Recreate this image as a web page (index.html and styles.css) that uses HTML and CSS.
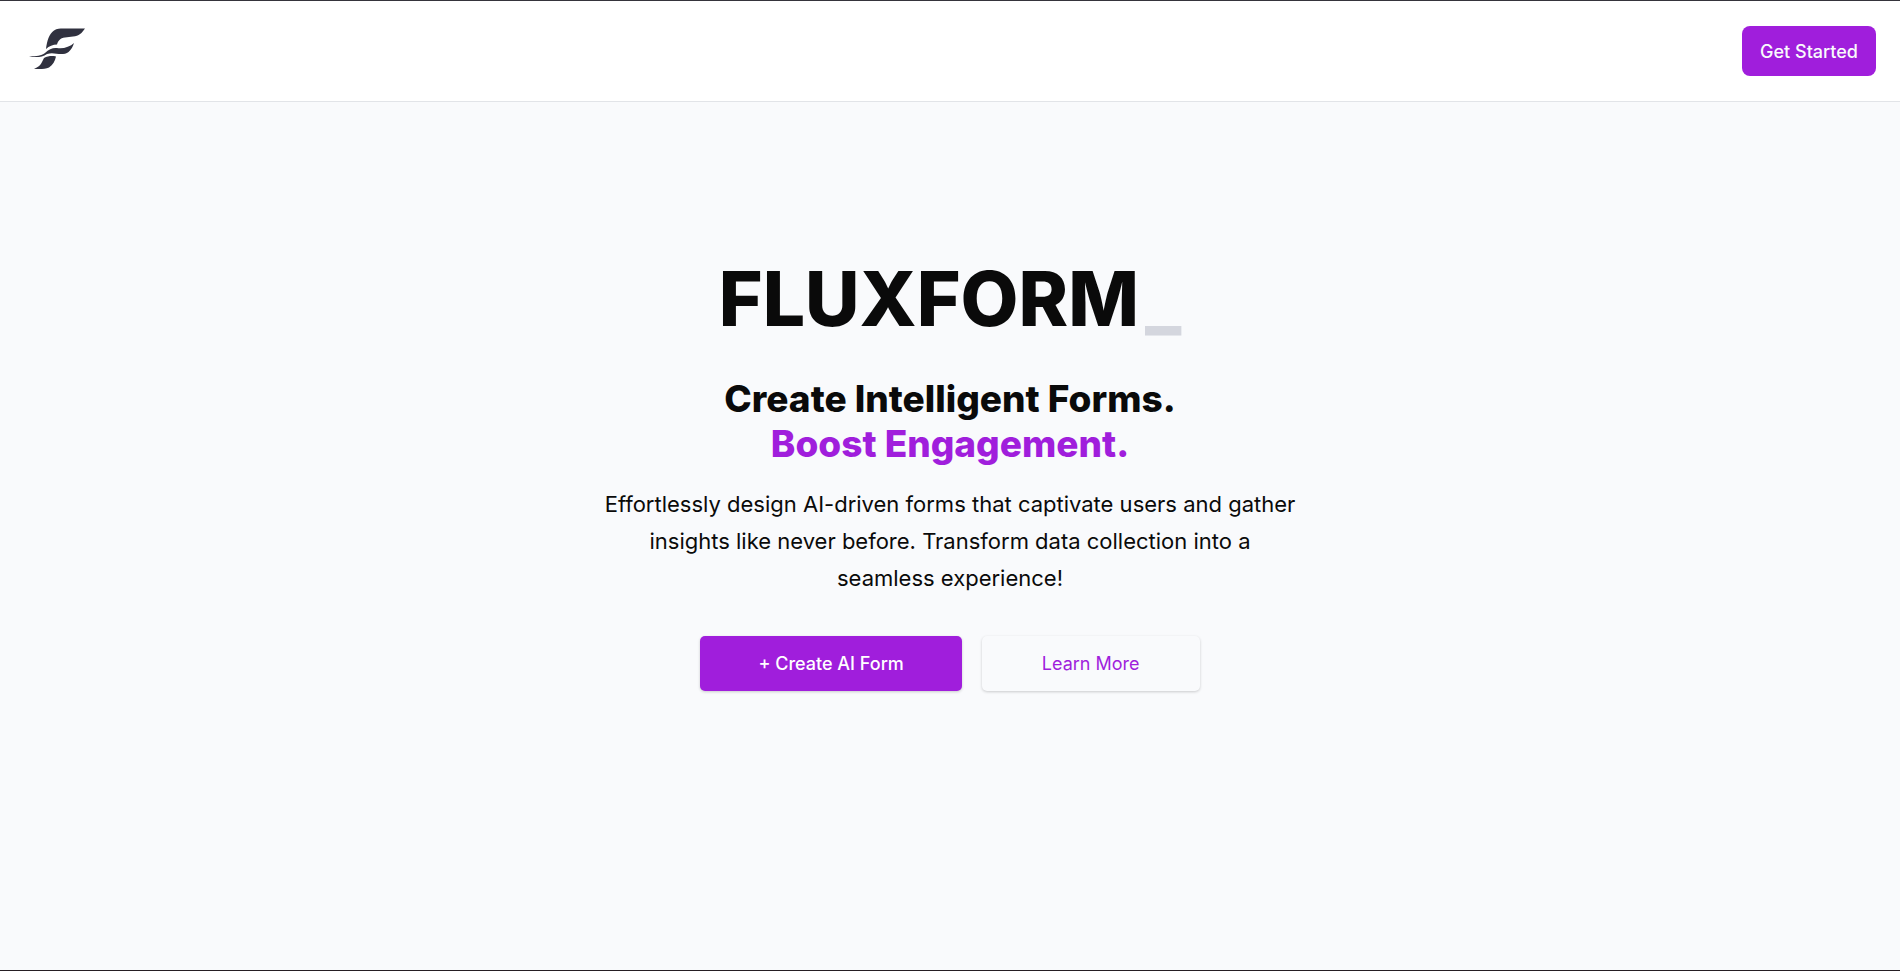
FILE: index.html
```html
<!DOCTYPE html>
<html lang="en">
<head>
<meta charset="utf-8">
<meta name="viewport" content="width=device-width, initial-scale=1">
<title>Fluxform</title>
<link rel="stylesheet" href="styles.css">
</head>
<body>
<header class="header">
  <a class="logo" href="#" aria-label="Fluxform home">
    <svg class="logo-mark" viewBox="0 4 66 50" aria-hidden="true">
      <path d="M22 27C23 19 25 12 30 8.500C33 6.500 36 6.500 39 6.500H61C58 11 55 14 49 14.500L41 15.500C36 16 34 19 33 22.500C29 22.500 25 24 22 27Z"/>
      <path d="M5 34.500C13 34 17 34 21 31C25 27 29 25.500 33 26C39 27 46 25 50 21C48 27 45 31.500 39 32C33 32.500 29 30 23 32C18 35.500 12 35.500 5 34.500Z"/>
      <path d="M20 36C24 34 28 33.500 32 34.500C31 39 29 43 25 45.500C21 47.500 15 47 10 47C14 45 17 43 18 40Z"/>
    </svg>
  </a>
  <button class="button button-start" type="button">Get Started</button>
</header>
<main class="hero">
  <h1 class="title">FLUXFORM<span class="cursor">_</span></h1>
  <h2 class="tagline">Create Intelligent Forms.<span class="tagline-accent">Boost Engagement.</span></h2>
  <p class="description">Effortlessly design AI-driven forms that captivate users and gather insights like never before. Transform data collection into a seamless experience!</p>
  <div class="actions">
    <button class="button button-primary" type="button">+ Create AI Form</button>
    <button class="button button-secondary" type="button">Learn More</button>
  </div>
</main>
</body>
</html>
```
FILE: styles.css
```css
* {
  box-sizing: border-box;
}

body {
  display: flex;
  flex-direction: column;
  min-height: 100vh;
  margin: 0;
  border-top: 1px solid #35343b;
  border-bottom: 1px solid #251e23;
  background: #f9fafc;
  color: #0a0a0a;
  font-family: Inter, "Liberation Sans", sans-serif;
}

.header {
  display: flex;
  align-items: center;
  justify-content: space-between;
  padding: 25px 24px;
  border-bottom: 1px solid #e2e4e8;
  background: #fff;
}

.logo {
  display: block;
}

.logo-mark {
  display: block;
  width: 66px;
  height: 50px;
  fill: #30313f;
}

.button {
  border: 0;
  border-radius: 5px;
  font: 500 18px/24px Inter, "Liberation Sans", sans-serif;
  cursor: pointer;
}

.button-start {
  padding: 14px 18px 12px;
  border-radius: 8px;
  background: #a01edc;
  color: #f9fafc;
}

.hero {
  display: flex;
  flex: 1;
  flex-direction: column;
  align-items: center;
  padding: 149px 24px 24px;
  text-align: center;
}

.title {
  margin: 0;
  font-size: 75px;
  font-weight: 800;
  line-height: 96px;
}

.cursor {
  margin-left: 6px;
  color: #d4d6de;
}

.tagline {
  margin: 29px 0 0;
  font-size: 37px;
  font-weight: 800;
  line-height: 45px;
}

.tagline-accent {
  display: block;
  color: #a01edc;
}

.description {
  max-width: 700px;
  margin: 20px 0 0;
  font-size: 22px;
  line-height: 37px;
}

.actions {
  display: flex;
  gap: 20px;
  margin-top: 39px;
}

.button-primary,
.button-secondary {
  padding: 16px 58px 15px;
  box-shadow: 0 1px 3px #00000030;
}

.button-primary {
  background: #a01edc;
  color: #fff;
}

.button-secondary {
  padding-inline: 60px;
  background: #f9fafc;
  color: #a01edc;
  font-weight: 400;
}
```
